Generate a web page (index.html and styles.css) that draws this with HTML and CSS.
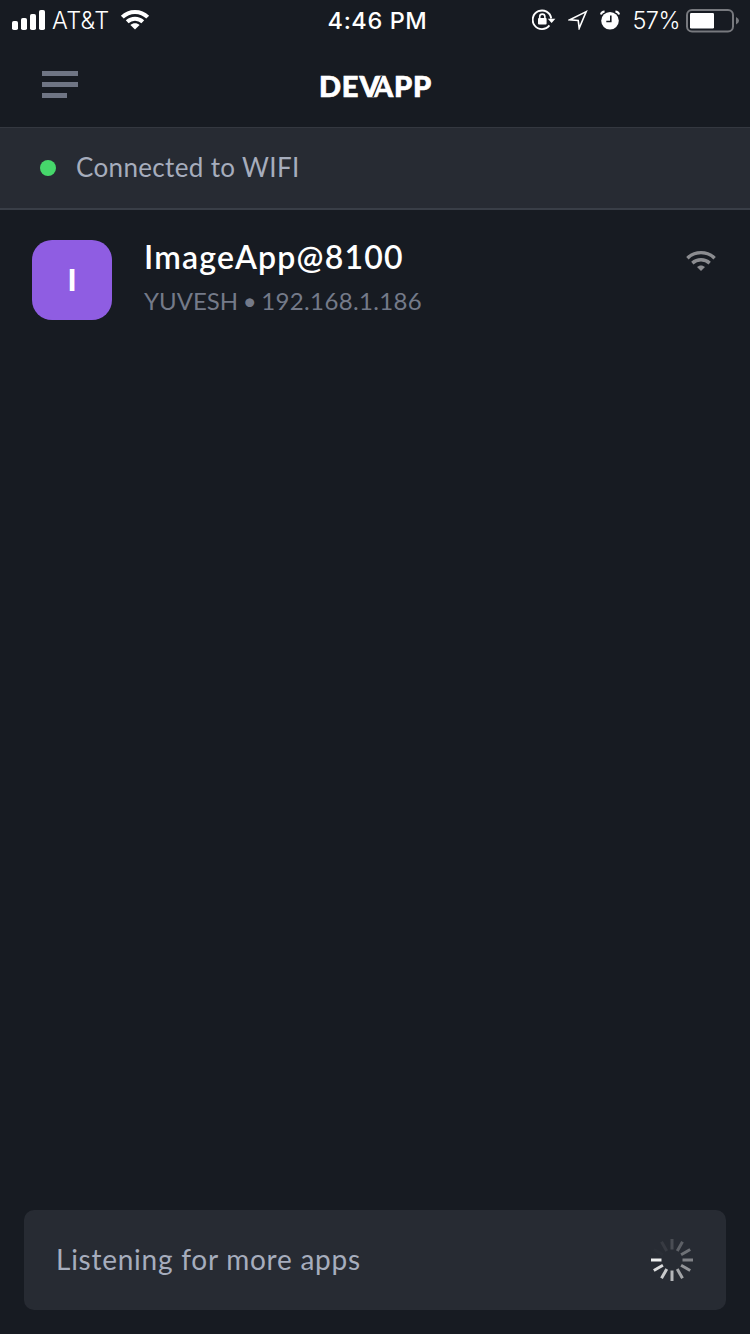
FILE: index.html
```html
<!DOCTYPE html>
<html lang="en">
<head>
<meta charset="utf-8">
<title>DevApp</title>
<link rel="stylesheet" href="styles.css">
</head>
<body>
<div class="screen">
  <div class="status">
    <div class="status-left">
      <svg class="signal" width="34" height="20" viewBox="0 0 34 20" fill="#fff"><rect x="0" y="11" width="6" height="9" rx="1.8"/><rect x="9" y="8" width="6" height="12" rx="1.8"/><rect x="18" y="4" width="6" height="16" rx="1.8"/><rect x="27" y="0" width="6" height="20" rx="1.8"/></svg>
      <span class="carrier">AT&amp;T</span>
      <svg class="wifi-status" width="30" height="22" viewBox="0 0 30 22"><g fill="none" stroke="#fff" stroke-width="4"><path d="M2.3 8.2C9.2 1.1 20.8 1.1 27.7 8.2"/><path d="M7.2 12.8C11.5 8.7 18.5 8.7 22.8 12.8"/></g><path d="M10.4 16C13 13.6 17 13.6 19.6 16L15 20.6Z" fill="#fff"/></svg>
    </div>
    <span class="clock">4:46 PM</span>
    <div class="status-right">
      <svg class="lock" width="24" height="22" viewBox="0 0 24 22"><path d="M17.4 16.4A9.3 9.3 0 1 1 19.2 9.5" fill="none" stroke="#fff" stroke-width="1.9"/><path d="M15.8 9.7H23.4L19.6 14Z" fill="#fff"/><rect x="6" y="9" width="8.6" height="6.6" rx="1" fill="#fff"/><path d="M7.7 10V7.7a2.6 2.6 0 0 1 5.2 0V10" fill="none" stroke="#fff" stroke-width="1.6"/></svg>
      <svg class="arrow" width="20" height="20" viewBox="0 0 20 20"><path d="M18.2 1.6 1.8 9.8 10.2 10.4 11.2 18.2Z" fill="none" stroke="#fff" stroke-width="1.6" stroke-linejoin="miter"/></svg>
      <svg class="alarm" width="20" height="20" viewBox="0 0 20 20"><circle cx="10" cy="10.8" r="8.8" fill="#fff"/><path d="M.9 4.4Q1.6 1.6 4.6 1.4M19.1 4.4Q18.4 1.6 15.4 1.4" fill="none" stroke="#fff" stroke-width="2"/><path d="M10.8 5.5V11.5H6.3" fill="none" stroke="#171b22" stroke-width="1.6"/></svg>
      <span class="percent">57%</span>
      <svg class="battery" width="54" height="24" viewBox="0 0 54 24"><rect x="1" y="1" width="46" height="21.5" rx="5" fill="none" stroke="#77797e" stroke-width="2"/><rect x="4" y="4" width="24" height="15.5" rx="1.2" fill="#fff"/><path d="M50 8q6 3.7 0 7.6Z" fill="#77797e"/></svg>
    </div>
  </div>
  <header class="header">
    <div class="menu"><i></i><i></i><i class="short"></i></div>
    <h1 class="logo">DE<span class="logo-v">V</span><span class="logo-a">A</span>PP</h1>
  </header>
  <div class="connection"><span class="dot"></span><span class="connection-text">Connected to WIFI</span></div>
  <main class="list">
    <div class="item">
      <div class="avatar">I</div>
      <div class="info">
        <div class="name">ImageApp@8100</div>
        <div class="detail">YUVESH • <span class="address">192.168.1.186</span></div>
      </div>
      <svg class="wifi-item" width="30" height="22" viewBox="0 0 30 22"><g fill="none" stroke="#8b8c90" stroke-width="3.4"><path d="M1.4 8.2C9 .8 21 .8 28.6 8.2"/><path d="M6.3 13.1C11.3 8.7 18.7 8.7 23.7 13.1"/></g><path d="M11 17C13.3 14.9 16.7 14.9 19 17L15 21Z" fill="#8b8c90"/></svg>
    </div>
  </main>
  <footer class="listening">
    <span class="listening-text">Listening for more apps</span>
    <svg width="44" height="44" viewBox="-22 -22 44 44" stroke="#fff" stroke-width="3">
      <path d="M0-10.5V-21" opacity=".16"/>
      <path d="M0-10.5V-21" opacity=".25" transform="rotate(30)"/>
      <path d="M0-10.5V-21" opacity=".33" transform="rotate(60)"/>
      <path d="M0-10.5V-21" opacity=".41" transform="rotate(90)"/>
      <path d="M0-10.5V-21" opacity=".5" transform="rotate(120)"/>
      <path d="M0-10.5V-21" opacity=".58" transform="rotate(150)"/>
      <path d="M0-10.5V-21" opacity=".66" transform="rotate(180)"/>
      <path d="M0-10.5V-21" opacity=".75" transform="rotate(210)"/>
      <path d="M0-10.5V-21" opacity=".84" transform="rotate(240)"/>
      <path d="M0-10.5V-21" opacity=".93" transform="rotate(270)"/>
      <path d="M0-10.5V-21" opacity=".01" transform="rotate(300)"/>
      <path d="M0-10.5V-21" opacity=".07" transform="rotate(330)"/>
    </svg>
  </footer>
</div>
</body>
</html>
```

FILE: styles.css
```css
* { box-sizing: border-box; }
body { margin: 0; background: #171b22; }
svg { display: block; flex: none; }
.screen {
  display: flex;
  flex-direction: column;
  width: 750px;
  height: 1334px;
  overflow: hidden;
  background: #171b22;
  font-family: Lato, sans-serif;
  white-space: nowrap;
}
.status {
  display: grid;
  grid-template-columns: 1fr auto 1fr;
  align-items: center;
  height: 40px;
  padding: 1px 10px 0 12px;
  color: #fff;
  font: 23.5px/39px Inter, sans-serif;
}
.status-left, .status-right { display: flex; align-items: center; }
.status-right { justify-content: flex-end; }
.signal, .wifi-status, .lock, .arrow, .alarm { margin-bottom: 1px; }
.carrier { margin-left: 6px; font-weight: 350; letter-spacing: .3px; }
.wifi-status { margin-left: 11px; }
.clock { padding-left: 3px; font-weight: 500; letter-spacing: .6px; }
.arrow { margin-left: 12px; }
.alarm { margin-left: 12px; }
.percent { margin-left: 12px; font-weight: 350; letter-spacing: -.5px; }
.battery { margin-left: 6px; }
.header {
  display: grid;
  grid-template-columns: 1fr auto 1fr;
  align-items: start;
  height: 87px;
  padding: 31px 0 0 42px;
}
.menu { display: flex; flex-direction: column; gap: 6px; }
.menu i { width: 36px; height: 5px; background: #6f7584; }
.menu .short { width: 25px; }
.logo {
  margin: 0 41px 0 0;
  color: #fff;
  font-size: 29px;
  font-weight: 900;
  line-height: 30px;
  letter-spacing: .9px;
  -webkit-text-stroke: .7px #fff;
}
.logo-v {
  position: relative;
  z-index: 1;
  text-shadow: 2px 0 0 #171b22;
}
.logo-a { margin-left: -8px; }
.connection {
  display: flex;
  align-items: center;
  height: 83px;
  padding-left: 40px;
  border-top: 1px solid #343840;
  border-bottom: 2px solid #393e47;
  background: #272b33;
}
.dot { width: 16px; height: 16px; border-radius: 50%; background: #46d76b; }
.connection-text { margin-left: 20px; padding-bottom: 2px; color: #a6adbd; font-size: 26px; letter-spacing: .35px; }
.list { flex: 1; padding: 30px 34px 0 32px; }
.item { display: flex; align-items: flex-start; }
.avatar {
  width: 80px;
  height: 80px;
  border-radius: 20px;
  background: #8f5de2;
  color: #fff;
  font-size: 30px;
  font-weight: 900;
  line-height: 78px;
  text-align: center;
}
.info { flex: 1; margin-left: 32px; }
.name { color: #fff; font-size: 32px; font-weight: 600; line-height: 34px; letter-spacing: 1.2px; }
.detail { margin-top: 10px; color: #747a89; font-size: 24px; line-height: 34px; word-spacing: -1.5px; }
.address { letter-spacing: .35px; }
.wifi-item { margin-top: 10px; }
.listening {
  display: flex;
  align-items: center;
  justify-content: space-between;
  height: 100px;
  margin: 0 24px 24px;
  padding: 0 32px;
  border-radius: 10px;
  background: #272b33;
}
.listening-text { padding-bottom: 3px; color: #a6adbd; font-size: 28px; letter-spacing: .75px; }
```
